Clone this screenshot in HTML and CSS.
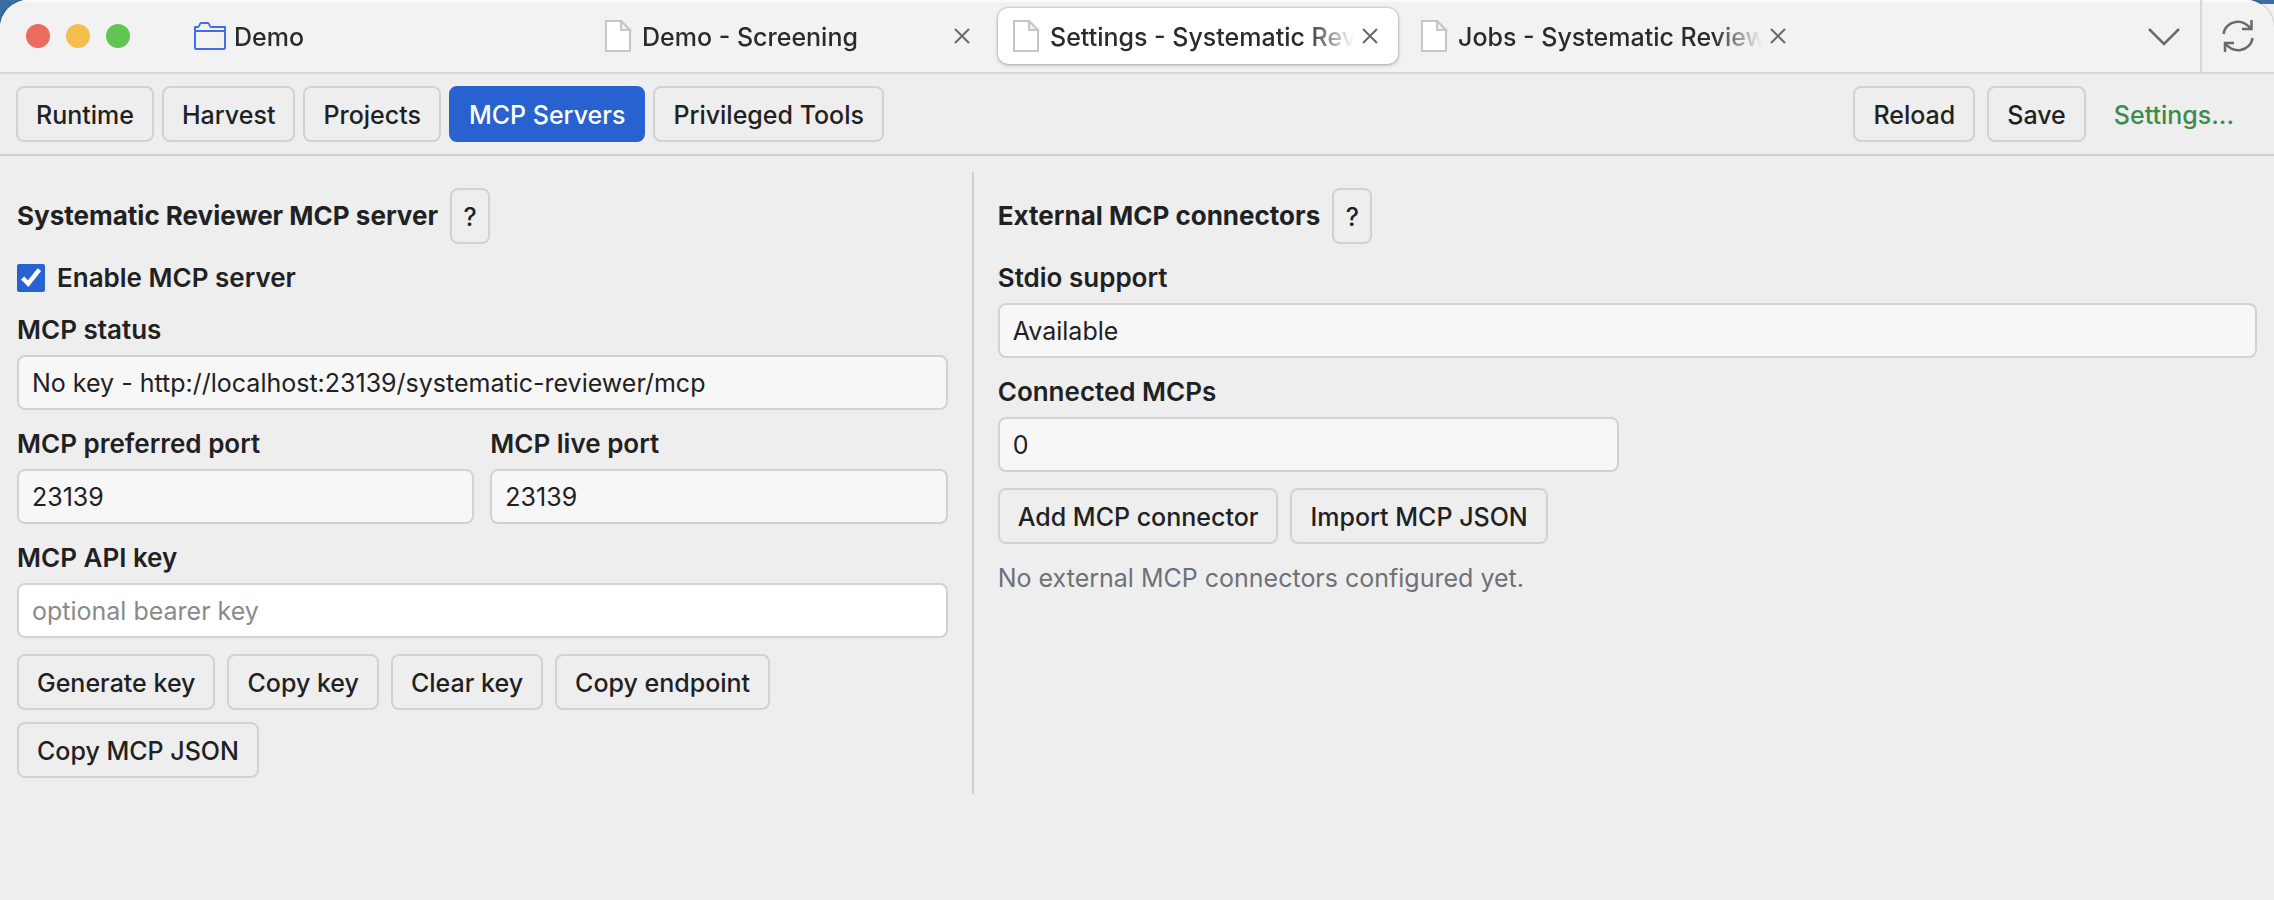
FILE: index.html
```
<!DOCTYPE html>
<html lang="en">
<head>
  <meta charset="UTF-8">
  <meta name="viewport" content="width=device-width, initial-scale=1.0">
  <title>Settings - Systematic Reviewer</title>
  <link rel="stylesheet" href="styles.css">
</head>
<body>
  <div class="window">
    <header class="titlebar">
      <div class="lights">
        <span class="light red"></span>
        <span class="light yellow"></span>
        <span class="light green"></span>
      </div>

      <nav class="tabs">
        <div class="tab">
          <svg class="tab-icon" viewBox="0 0 32 32" fill="none" stroke="#3f6fe8" stroke-width="2" stroke-linejoin="round">
            <path d="M1 28V7h3c1.500 0 1.500-4 3-4h7c1.500 0 1.500 4 3 4h14v21a1 1 0 0 1-1 1H2a1 1 0 0 1-1-1z"/>
            <path d="M1 11h30"/>
          </svg>
          <span class="tab-title">Demo</span>
        </div>
        <div class="tab">
          <svg class="tab-icon" viewBox="0 0 32 32" stroke="#c6c6c6" stroke-width="2">
            <path d="M4 1h15l9 9v21H4z" fill="#fff"/>
            <path d="M19 1v9h9z" fill="#f0f0f0"/>
          </svg>
          <span class="tab-title">Demo - Screening</span>
          <button class="tab-close" aria-label="Close tab">
            <svg viewBox="0 0 16 16" fill="none" stroke="#6a6a6a" stroke-width="2"><path d="M1 1l14 14M15 1L1 15"/></svg>
          </button>
        </div>
        <div class="tab active">
          <svg class="tab-icon" viewBox="0 0 32 32" stroke="#c6c6c6" stroke-width="2">
            <path d="M4 1h15l9 9v21H4z" fill="#fff"/>
            <path d="M19 1v9h9z" fill="#f0f0f0"/>
          </svg>
          <span class="tab-title">Settings - Systematic Reviewer</span>
          <button class="tab-close" aria-label="Close tab">
            <svg viewBox="0 0 16 16" fill="none" stroke="#6a6a6a" stroke-width="2"><path d="M1 1l14 14M15 1L1 15"/></svg>
          </button>
        </div>
        <div class="tab">
          <svg class="tab-icon" viewBox="0 0 32 32" stroke="#c6c6c6" stroke-width="2">
            <path d="M4 1h15l9 9v21H4z" fill="#fff"/>
            <path d="M19 1v9h9z" fill="#f0f0f0"/>
          </svg>
          <span class="tab-title">Jobs - Systematic Reviewer</span>
          <button class="tab-close" aria-label="Close tab">
            <svg viewBox="0 0 16 16" fill="none" stroke="#6a6a6a" stroke-width="2"><path d="M1 1l14 14M15 1L1 15"/></svg>
          </button>
        </div>
      </nav>

      <button class="title-button" aria-label="List all tabs">
        <svg viewBox="0 0 32 32" fill="none" stroke="#6a6a6a" stroke-width="2.500"><path d="M1 9l15 15L31 9"/></svg>
      </button>
      <button class="title-button sync" aria-label="Sync">
        <svg viewBox="0 0 32 32" fill="none" stroke="#6a6a6a" stroke-width="2.500">
          <path d="M1.500 14A14.500 13.500 0 0 1 29 9.500M29.500 0v9H20"/>
          <path d="M30.500 18A14.500 13.500 0 0 1 3 22.500M3 32v-9h9"/>
        </svg>
      </button>
    </header>

    <div class="toolbar">
      <button class="btn">Runtime</button>
      <button class="btn">Harvest</button>
      <button class="btn">Projects</button>
      <button class="btn selected">MCP Servers</button>
      <button class="btn">Privileged Tools</button>
      <div class="toolbar-actions">
        <button class="btn">Reload</button>
        <button class="btn">Save</button>
        <span class="status">Settings...</span>
      </div>
    </div>

    <main class="content">
      <section class="panel">
        <div class="panel-head">
          <h2>Systematic Reviewer MCP server</h2>
          <button class="btn help" aria-label="Help">?</button>
        </div>

        <label class="check">
          <input type="checkbox" checked>
          Enable MCP server
        </label>

        <div class="field">
          <label for="mcp-status">MCP status</label>
          <input type="text" id="mcp-status" value="No key - http://localhost:23139/systematic-reviewer/mcp" readonly>
        </div>

        <div class="row">
          <div class="field">
            <label for="preferred-port">MCP preferred port</label>
            <input type="text" id="preferred-port" value="23139" readonly>
          </div>
          <div class="field">
            <label for="live-port">MCP live port</label>
            <input type="text" id="live-port" value="23139" readonly>
          </div>
        </div>

        <div class="field">
          <label for="api-key">MCP API key</label>
          <input type="text" id="api-key" placeholder="optional bearer key">
        </div>

        <div class="buttons">
          <button class="btn">Generate key</button>
          <button class="btn">Copy key</button>
          <button class="btn">Clear key</button>
          <button class="btn">Copy endpoint</button>
          <button class="btn">Copy MCP JSON</button>
        </div>
      </section>

      <section class="panel external">
        <div class="panel-head">
          <h2>External MCP connectors</h2>
          <button class="btn help" aria-label="Help">?</button>
        </div>

        <div class="field">
          <label for="stdio">Stdio support</label>
          <input type="text" id="stdio" value="Available" readonly>
        </div>

        <div class="row">
          <div class="field">
            <label for="connected">Connected MCPs</label>
            <input type="text" id="connected" value="0" readonly>
          </div>
        </div>

        <div class="buttons">
          <button class="btn">Add MCP connector</button>
          <button class="btn">Import MCP JSON</button>
        </div>

        <p class="empty">No external MCP connectors configured yet.</p>
      </section>
    </main>
  </div>
</body>
</html>
```

FILE: styles.css
```
* {
  box-sizing: border-box;
}

/* Desktop behind the window corners */
body {
  margin: 0;
  background: linear-gradient(#f2f2f2, #f2f2f2) right 4px / 40px 40px no-repeat #3a6ea5;
  color: #1f2123;
  font-family: Inter, "Liberation Sans", sans-serif;
  font-size: 25px;
  line-height: 36px;
}

button,
input {
  font: inherit;
  color: inherit;
}

h2,
p {
  margin: 0;
}

.window {
  min-height: 100vh;
  background: #eeeeee;
  border-radius: 28px 28px 0 0;
  box-shadow: 0 0 2px rgba(0, 0, 0, 0.5);
  overflow: hidden;
}

/* Title bar with tabs */
.titlebar {
  display: flex;
  align-items: center;
  height: 74px;
  background: #f2f2f2;
  border-bottom: 2px solid #d8d8d8;
  box-shadow: inset 0 2px 0 #fafafa;
}

.lights {
  display: flex;
  gap: 16px;
  padding: 0 52px 0 26px;
}

.light {
  width: 24px;
  height: 24px;
  border-radius: 50%;
}

.red {
  background: #ed6a5f;
}

.yellow {
  background: #f5bf4f;
}

.green {
  background: #61c554;
}

.tabs {
  display: flex;
  flex: 1;
  gap: 8px;
  min-width: 0;
}

.tab {
  display: flex;
  align-items: center;
  gap: 8px;
  flex: 0 1 400px;
  min-width: 0;
  height: 56px;
  padding: 0 12px;
  border-radius: 10px;
}

.tab.active {
  background: #ffffff;
  box-shadow: 0 0 2px rgba(0, 0, 0, 0.3), 0 1px 4px rgba(0, 0, 0, 0.25);
}

.tab-icon {
  flex: none;
  width: 32px;
  height: 32px;
}

.tab-title {
  flex: 1;
  margin-right: -8px;
  padding-top: 2px;
  overflow: hidden;
  white-space: nowrap;
  color: #2b2b2b;
  font-weight: 500;
  mask-image: linear-gradient(to left, transparent, #000 48px);
}

.tab-close {
  flex: none;
  display: flex;
  align-items: center;
  justify-content: center;
  width: 32px;
  height: 32px;
  padding: 0;
  border: none;
  background: none;
}

.tab-close svg {
  width: 16px;
  height: 16px;
}

.title-button {
  flex: none;
  display: flex;
  align-items: center;
  justify-content: center;
  height: 100%;
  padding: 0 20px;
  border: none;
  background: none;
}

.title-button svg {
  width: 32px;
  height: 32px;
}

.sync {
  border-left: 2px solid #d8d8d8;
}

/* Section buttons */
.toolbar {
  display: flex;
  gap: 8px;
  padding: 12px 16px;
  border-bottom: 2px solid #d0d0d0;
}

.btn {
  height: 56px;
  padding: 2px 18px 0;
  border: 2px solid #d2d2d2;
  border-radius: 8px;
  background: #eeeeee;
  font-weight: 500;
  white-space: nowrap;
}

.btn.selected {
  background: #2862d0;
  border-color: #2862d0;
  color: #ffffff;
}

.toolbar-actions {
  display: flex;
  align-items: center;
  gap: 12px;
  margin-left: auto;
}

.status {
  padding: 2px 24px 0 16px;
  color: #3b8c4b;
  font-weight: 500;
}

/* Panels */
.content {
  display: grid;
  grid-template-columns: minmax(0, 42fr) minmax(0, 58fr);
  gap: 24px;
  padding: 16px 17px;
}

.panel {
  display: flex;
  flex-direction: column;
  gap: 16px;
  padding: 16px 0;
}

.external {
  padding-left: 24px;
  border-left: 2px solid #d0d0d0;
}

.panel-head {
  display: flex;
  align-items: center;
  gap: 12px;
}

.panel-head h2 {
  font-size: 26px;
  font-weight: 700;
}

.help {
  width: 40px;
  padding: 2px 0 0;
}

.check {
  display: flex;
  align-items: center;
  gap: 12px;
  font-size: 26px;
  font-weight: 600;
}

.check input {
  width: 28px;
  height: 28px;
  margin: 0;
  accent-color: #2862d0;
}

.field label {
  display: block;
  margin-bottom: 7px;
  font-size: 26px;
  font-weight: 600;
}

.field input {
  display: block;
  width: 100%;
  height: 55px;
  padding: 0 13px;
  border: 2px solid #d2d2d2;
  border-radius: 8px;
  background: #ffffff;
}

.field input:read-only {
  background: #f7f7f7;
}

.field input::placeholder {
  color: #8a8a8a;
}

.row {
  display: grid;
  grid-template-columns: 1fr 1fr;
  gap: 16px;
}

.buttons {
  display: flex;
  flex-wrap: wrap;
  gap: 12px;
}

.empty {
  color: #6e7177;
}
```
